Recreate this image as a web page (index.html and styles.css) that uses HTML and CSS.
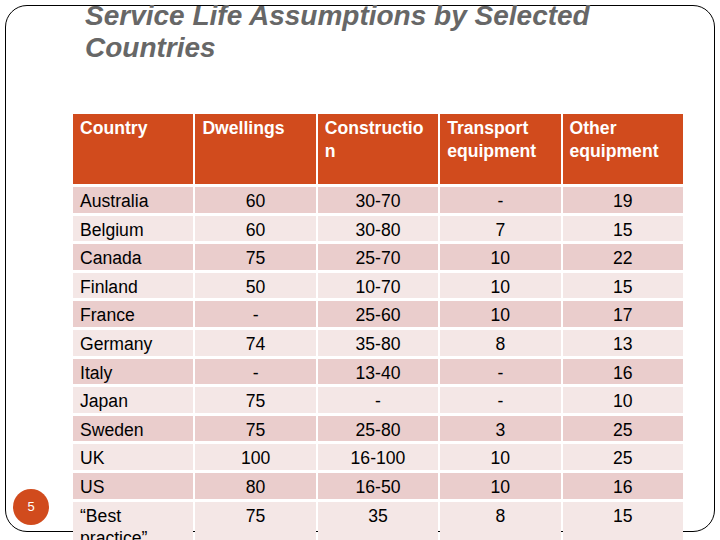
FILE: index.html
```html
<!DOCTYPE html>
<html>
<head>
<meta charset="utf-8">
<link rel="stylesheet" href="styles.css">
</head>
<body>
<div class="slide">
  <h1 class="title">Service Life Assumptions by Selected Countries</h1>
  <table class="data">
    <colgroup>
      <col class="c"><col class="c"><col class="c"><col class="c"><col class="c">
    </colgroup>
    <thead>
      <tr><th>Country</th><th>Dwellings</th><th>Construction</th><th>Transport equipment</th><th>Other equipment</th></tr>
    </thead>
    <tbody>
      <tr class="dark"><td>Australia</td><td>60</td><td>30-70</td><td>-</td><td>19</td></tr>
      <tr class="light"><td>Belgium</td><td>60</td><td>30-80</td><td>7</td><td>15</td></tr>
      <tr class="dark"><td>Canada</td><td>75</td><td>25-70</td><td>10</td><td>22</td></tr>
      <tr class="light"><td>Finland</td><td>50</td><td>10-70</td><td>10</td><td>15</td></tr>
      <tr class="dark"><td>France</td><td>-</td><td>25-60</td><td>10</td><td>17</td></tr>
      <tr class="light"><td>Germany</td><td>74</td><td>35-80</td><td>8</td><td>13</td></tr>
      <tr class="dark"><td>Italy</td><td>-</td><td>13-40</td><td>-</td><td>16</td></tr>
      <tr class="light"><td>Japan</td><td>75</td><td>-</td><td>-</td><td>10</td></tr>
      <tr class="dark"><td>Sweden</td><td>75</td><td>25-80</td><td>3</td><td>25</td></tr>
      <tr class="light"><td>UK</td><td>100</td><td>16-100</td><td>10</td><td>25</td></tr>
      <tr class="dark"><td>US</td><td>80</td><td>16-50</td><td>10</td><td>16</td></tr>
      <tr class="light"><td>“Best practice”</td><td>75</td><td>35</td><td>8</td><td>15</td></tr>
    </tbody>
  </table>
  <div class="badge">5</div>
</div>
</body>
</html>
```

FILE: styles.css
```css
html, body {
  margin: 0;
  padding: 0;
  overflow: hidden;
  background: #ffffff;
  height: 540px;
}

body {
  font-family: "Liberation Sans", Arial, sans-serif;
}

.slide {
  position: relative;
  box-sizing: border-box;
  margin: 5px 0 0 5px;
  width: 710px;
  height: 527px;
  border: 1.3px solid #000;
  border-radius: 22px;
}

.title {
  margin: -6px 0 0 79px;
  font-size: 28px;
  font-weight: bold;
  font-style: italic;
  line-height: 32px;
  color: #676767;
}

.data {
  margin: 47px 0 0 65px;
  table-layout: fixed;
  width: 614px;
  border-collapse: separate;
  border-spacing: 2px 3px;
  font-size: 17.6px;
  color: #000;
}

.data th {
  background: #d14b1d;
  color: #fff;
  font-weight: bold;
  text-align: left;
  vertical-align: top;
  height: 70px;
  box-sizing: border-box;
  padding: 3px 7px 0 7px;
  line-height: 22.5px;
  overflow-wrap: anywhere;
}

.data td {
  height: 25.6px;
  box-sizing: border-box;
  padding: 3px 7px 0 7px;
  line-height: 22.6px;
  text-align: center;
  vertical-align: top;
}

.data td:first-child {
  text-align: left;
}

.data tr.dark td {
  background: #eacdcc;
}

.data tr.light td {
  background: #f4e7e6;
}

.badge {
  position: absolute;
  left: 7px;
  top: 483px;
  width: 36px;
  height: 36px;
  border-radius: 50%;
  background: #d14b1d;
  color: #fff;
  font-size: 13px;
  line-height: 36px;
  text-align: center;
}
```
